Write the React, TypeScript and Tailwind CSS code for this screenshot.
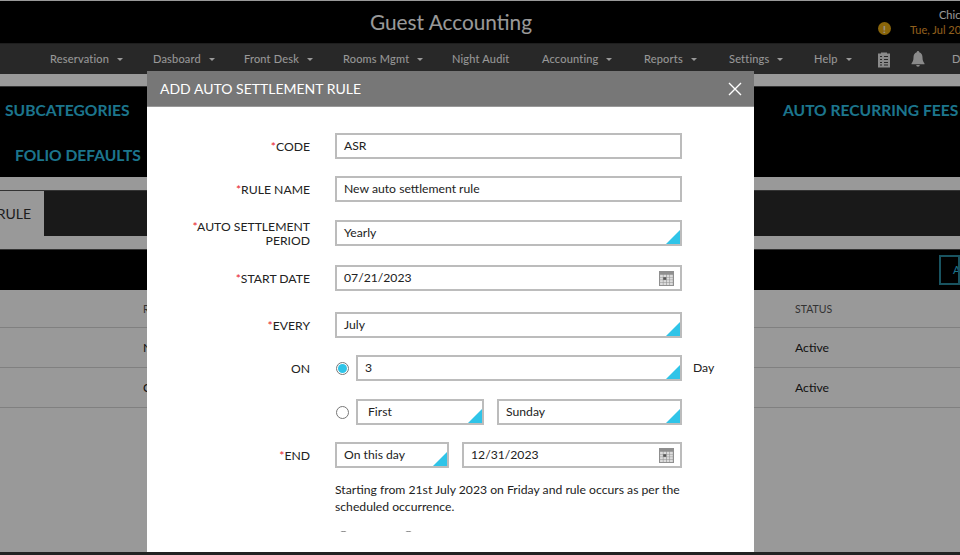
import React from "react";

const Caret = () => <span className="ml-[8px] inline-block h-0 w-0 border-x-[3px] border-t-[3px] border-x-transparent border-t-white align-middle" />;

const NavItem = ({ label, caret = true, w }: { label: string; caret?: boolean; w: string }) => (
  <div className={`${w} shrink-0 whitespace-nowrap`}>
    {label}
    {caret && <Caret />}
  </div>
);

const Triangle = () => (
  <span className="absolute bottom-0 right-0 h-[14px] w-[14px] bg-[#2fc4e8] [clip-path:polygon(100%_0,100%_100%,0_100%)]" />
);

const CalendarIcon = () => (
  <svg viewBox="0 0 14 14" className="absolute right-[6px] top-[4px] h-[15px] w-[15px]">
    <rect width="14" height="14" fill="#8f8f8f" />
    {[0, 1, 2, 3].map((r) =>
      [0, 1, 2, 3].map((c) => (
        <rect key={`${r}-${c}`} x={1 + c * 3.1} y={3.5 + r * 2.5} width="2.6" height="2.1" fill={r === 1 && c === 1 ? "#555" : "#dcdcdc"} />
      ))
    )}
  </svg>
);

const Field = ({ value, w, select, date, pad = "pl-[7px]" }: { value: string; w: string; select?: boolean; date?: boolean; pad?: string }) => (
  <div className={`relative flex h-[26px] ${w} shrink-0 items-center border-2 border-[#bcbcbc] bg-white pt-px ${pad} text-[12.2px] text-[#222]`}>
    {value}
    {select && <Triangle />}
    {date && <CalendarIcon />}
  </div>
);

const Label = ({ text, req = true }: { text: React.ReactNode; req?: boolean }) => (
  <div className="w-[163px] shrink-0 pt-px text-right text-[12.2px] leading-[14px] text-[#222]">
    {req && <span className="text-[#e8212b]">*</span>}
    {text}
  </div>
);

const Radio = ({ on }: { on?: boolean }) => (
  <span className="ml-px flex h-[13px] w-[13px] shrink-0 items-center justify-center rounded-full border border-[#777] bg-white">
    {on && <span className="h-[9px] w-[9px] rounded-full bg-[#2fc4e8]" />}
  </span>
);

const Row = ({ label, mt, children }: { label?: React.ReactNode; mt: string; children: React.ReactNode }) => (
  <div className={`flex h-[26px] items-center ${mt}`}>
    {label ?? <div className="w-[163px] shrink-0" />}
    <div className="ml-[25px] flex items-center">{children}</div>
  </div>
);

export default function App() {
  return (
    <div className="relative h-[555px] w-[960px] overflow-hidden bg-white font-['Lato',_'Noto_Sans',_sans-serif]">
      {/* Page behind the dialog */}
      <div className="h-px bg-white" />
      <header className="relative flex h-[42px] items-center justify-center bg-black pr-[58px] text-white">
        <span className="text-[20.8px]">Guest Accounting</span>
        <div className="absolute left-[910px] top-[6px] flex w-[120px] flex-col whitespace-nowrap text-[11px] leading-[15px]">
          <span className="pl-[29px]">Chicago</span>
          <span className="text-[#f0a030]">Tue, Jul 20, 2023</span>
        </div>
        <span className="absolute left-[878px] top-[21px] flex h-[13px] w-[13px] items-center justify-center rounded-full bg-[#e5a812] text-[10px] font-bold leading-none text-white">!</span>
      </header>
      <nav className="flex h-[31px] items-center overflow-hidden whitespace-nowrap border-t border-[#333] bg-[#444] pl-[50px] text-[11px] tracking-[0.2px] text-white">
        <NavItem label="Reservation" w="w-[103px]" />
        <NavItem label="Dasboard" w="w-[91px]" />
        <NavItem label="Front Desk" w="w-[99px]" />
        <NavItem label="Rooms Mgmt" w="w-[109px]" />
        <NavItem label="Night Audit" caret={false} w="w-[90px]" />
        <NavItem label="Accounting" w="w-[102px]" />
        <NavItem label="Reports" w="w-[85px]" />
        <NavItem label="Settings" w="w-[85px]" />
        <NavItem label="Help" w="w-[63px]" />
        <svg viewBox="0 0 14 16" className="h-[17px] w-[14px] shrink-0" fill="#e6e6e6">
          <path d="M1 2h3V1h6v1h3v14H1z" />
          <path d="M3 5h2M7 5h4M3 8h2M7 8h4M3 11h2M7 11h4M3 13.5h2M7 13.5h4" stroke="#444" strokeWidth="1" />
        </svg>
        <svg viewBox="0 0 14 16" className="ml-[20px] h-[16px] w-[14px] shrink-0" fill="#e6e6e6">
          <path d="M7 0a1.2 1.2 0 0 1 1.2 1.3C10.6 2 11.5 4 11.5 6.5c0 3 .8 4.5 2 6v.8H.5v-.8c1.2-1.5 2-3 2-6C2.5 4 3.4 2 5.8 1.3A1.2 1.2 0 0 1 7 0zM5.2 14h3.6a1.8 1.8 0 0 1-3.6 0z" />
        </svg>
        <span className="ml-[27px] w-[10px] overflow-hidden">D</span>
      </nav>
      <div className="h-[13px] border-b border-[#555] bg-white" />
      <section className="h-[90px] bg-black text-[15.6px] font-bold text-[#2fc4ea]">
        <div className="flex h-[45px] items-center justify-between whitespace-nowrap pl-[5px] pt-[3px]">
          <span>SUBCATEGORIES</span>
          <span className="w-[177px]">AUTO RECURRING FEES</span>
        </div>
        <div className="flex h-[45px] items-center pl-[15px] pt-[2px]">FOLIO DEFAULTS</div>
      </section>
      <div className="h-[14px] border-b border-[#555] bg-white" />
      <div className="flex h-[45px] bg-[#2b2b2b]">
        <div className="flex w-[44px] items-center justify-end bg-[#ffffff] pr-[13px] text-[14px] text-[#333]">RULE</div>
      </div>
      <div className="h-[14px] border-b border-[#555] bg-white" />
      <div className="flex h-[40px] items-center justify-end bg-black">
        <div className="flex h-[30px] w-[21px] items-center overflow-hidden border-2 border-[#2a8aa0] pl-[12px] text-[11px] text-[#2fc4ea]">A</div>
      </div>
      <div className="flex h-[38px] items-center border-b border-[#d5d5d5] pl-[143px] pt-[2px] text-[10.5px] text-[#555]">
        <span className="w-[652px]">RULE</span>
        <span>STATUS</span>
      </div>
      {["N", "C"].map((n) => (
        <div key={n} className="flex h-[40px] items-center border-b border-[#d5d5d5] pl-[143px] pt-[2px] text-[12.2px] text-[#222]">
          <span className="w-[652px]">{n}</span>
          <span>Active</span>
        </div>
      ))}

      {/* Scrim */}
      <div className="absolute inset-0 bg-black/40" />
      <div className="absolute bottom-0 left-0 h-[3px] w-full bg-[#222]" />

      {/* Dialog */}
      <div className="absolute left-[147px] top-[71px] flex h-[481px] w-[607px] flex-col bg-white">
        <div className="flex h-[36px] shrink-0 items-center justify-between border-b border-[#999] bg-[#777] pl-[13px] pr-[12px] text-[14px] text-white">
          <span>ADD AUTO SETTLEMENT RULE</span>
          <svg viewBox="0 0 14 14" className="h-[14px] w-[14px]" fill="none" stroke="white" strokeWidth="1.4">
            <path d="M1 1l12 12M13 1L1 13" />
          </svg>
        </div>
        <div className="h-[425px] shrink-0 overflow-hidden pt-[26px]">
          <Row label={<Label text="CODE" />} mt="mt-0"><Field value="ASR" w="w-[347px]" /></Row>
          <Row label={<Label text="RULE NAME" />} mt="mt-[17px]"><Field value="New auto settlement rule" w="w-[347px]" /></Row>
          <Row label={<Label text={<>AUTO SETTLEMENT<br />PERIOD</>} />} mt="mt-[18px]"><Field value="Yearly" w="w-[347px]" select /></Row>
          <Row label={<Label text="START DATE" />} mt="mt-[19px]"><Field value="07/21/2023" w="w-[347px]" date /></Row>
          <Row label={<Label text="EVERY" />} mt="mt-[21px]"><Field value="July" w="w-[347px]" select /></Row>
          <Row label={<Label text="ON" req={false} />} mt="mt-[17px]">
            <Radio on />
            <div className="ml-[7px]"><Field value="3" w="w-[326px]" select /></div>
            <span className="ml-[11px] text-[12.2px] text-[#222]">Day</span>
          </Row>
          <Row mt="mt-[18px]">
            <Radio />
            <div className="ml-[7px]"><Field value="First" w="w-[128px]" select pad="pl-[10px]" /></div>
            <div className="ml-[13px]"><Field value="Sunday" w="w-[185px]" select /></div>
          </Row>
          <Row label={<Label text="END" />} mt="mt-[17px]">
            <Field value="On this day" w="w-[114px]" select />
            <div className="ml-[13px]"><Field value="12/31/2023" w="w-[220px]" date /></div>
          </Row>
          <p className="ml-[188px] mt-[13px] w-[360px] text-[12.2px] leading-[17px] text-[#222]">
            Starting from 21st July 2023 on Friday and rule occurs as per the scheduled occurrence.
          </p>
          <div className="ml-[189px] mt-[16px] flex gap-[51px]">
            <Radio />
            <Radio />
          </div>
        </div>
      </div>
    </div>
  );
}
